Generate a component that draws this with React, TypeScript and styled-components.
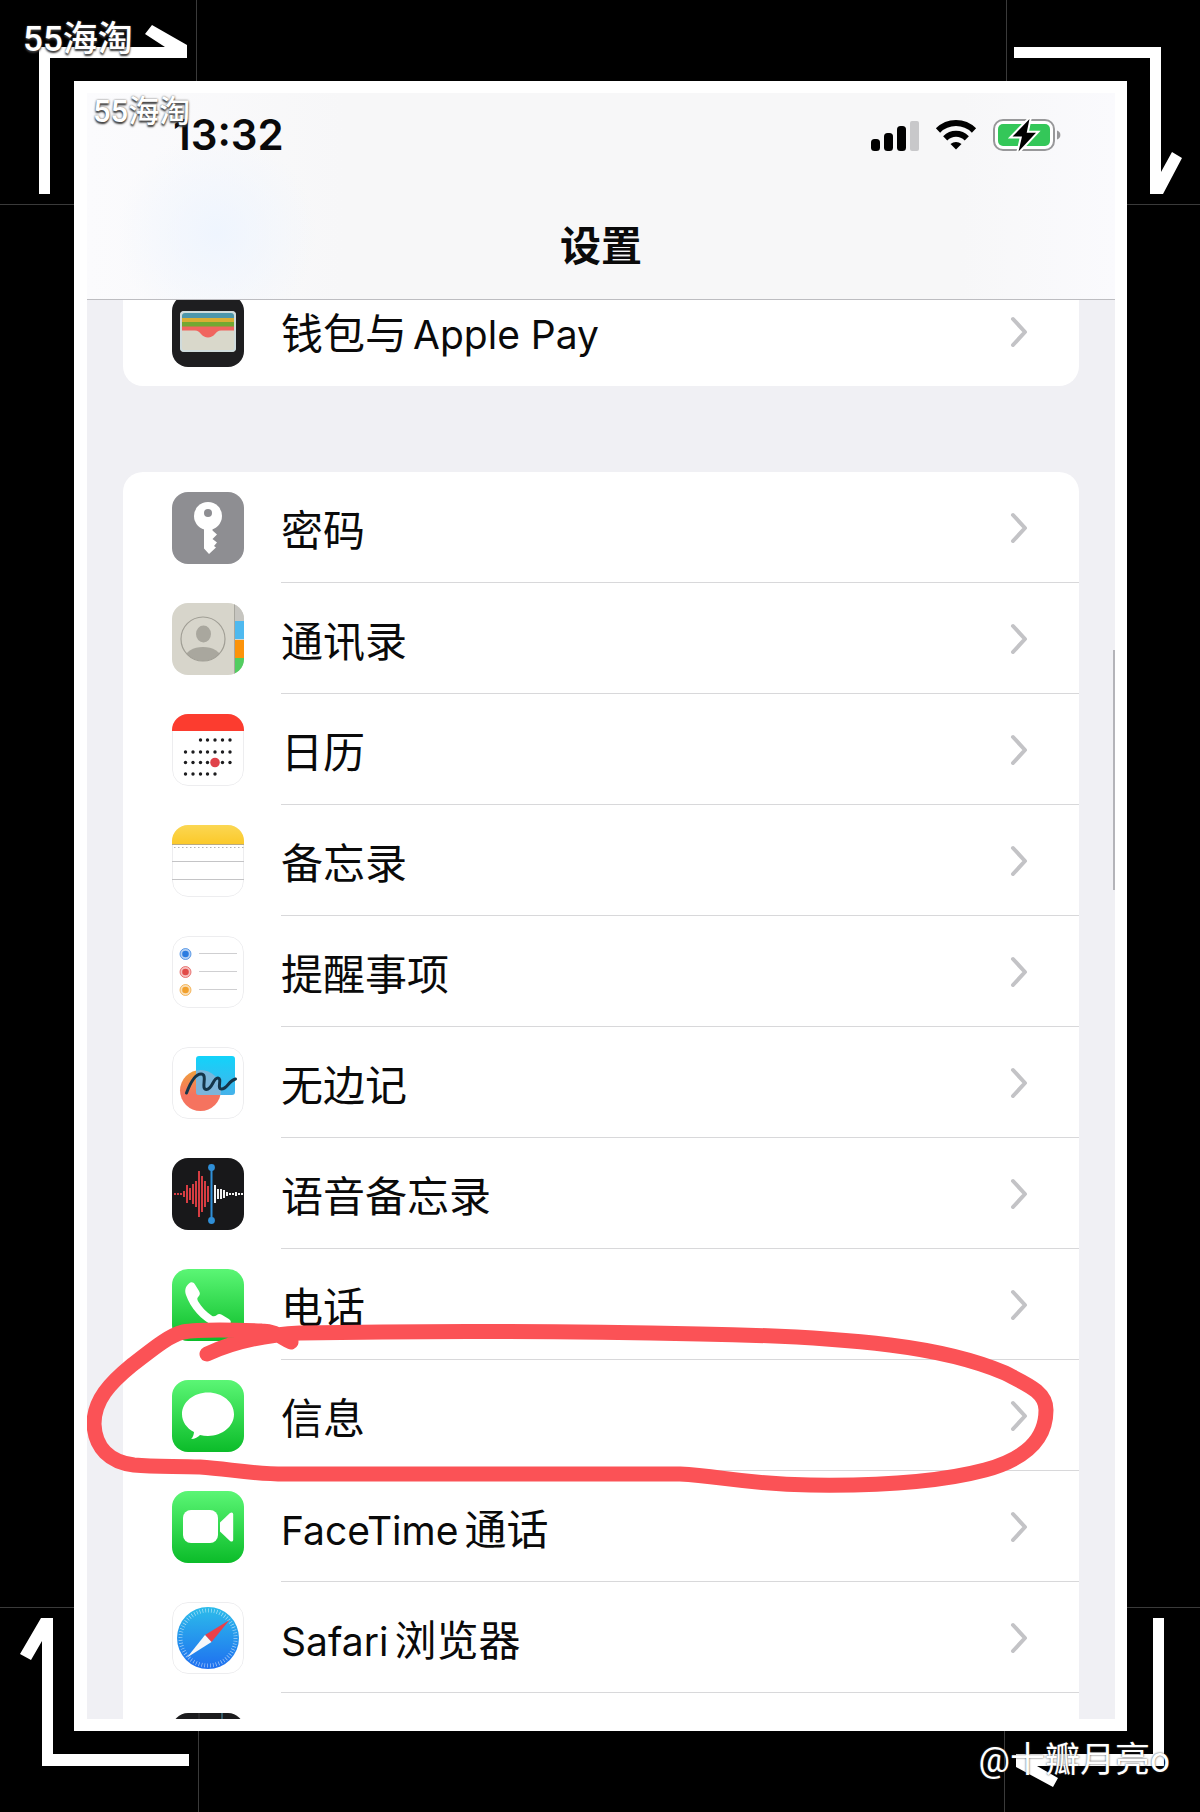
import type { ReactNode } from "react";
import styled, { createGlobalStyle, css } from "styled-components";

const GlobalStyle = createGlobalStyle`
  * {
    box-sizing: border-box;
  }

  body {
    margin: 0;
    background: #000;
    font-family: Inter, "Noto Sans CJK SC", sans-serif;
    color: #0a0a0a;
  }
`;

const StyledPage = styled.div`
  position: relative;
  display: flex;
  height: 100vh;
  padding: 81px 73px 81px 74px;
  background: #000;
  overflow: hidden;
`;

const StyledFrame = styled.main`
  display: flex;
  flex: 1;
  min-width: 0;
  padding: 12px 12px 12px 13px;
  background: #fff;
`;

const StyledScreen = styled.div`
  position: relative;
  display: flex;
  flex: 1;
  flex-direction: column;
  min-width: 0;
  background: #f0f0f4;
`;

const StyledHeader = styled.header`
  flex-shrink: 0;
  background:
    radial-gradient(circle at 130px 140px, #eff5fe 0, rgba(239, 245, 254, 0) 100px),
    linear-gradient(90deg, #fbfbfd 0, #f7f7f8 25%, #f7f7f8 85%, #fafafd 100%);
  border-bottom: 1px solid #bdbdc1;
`;

const StyledStatusBar = styled.div`
  display: flex;
  justify-content: space-between;
  align-items: center;
  height: 84px;
  padding: 0 54px 0 86px;
`;

const StyledTime = styled.time`
  font-size: 42px;
  font-weight: 600;
  line-height: 48px;
`;

const StyledStatusIcons = styled.div`
  display: flex;
  align-items: center;
  gap: 16px;
`;

const StyledTitle = styled.h1`
  margin: 0;
  padding: 44px 0 28px;
  font-size: 41px;
  font-weight: 600;
  line-height: 50px;
  text-align: center;
`;

const StyledScroller = styled.div`
  flex: 1;
  min-height: 0;
  padding: 0 36px;
  overflow: hidden;
`;

const StyledGroup = styled.ul<{ $scrolled?: boolean }>`
  margin: 0 0 86px;
  padding: 0;
  list-style: none;
  background: #fff;
  border-radius: 20px;

  /* the first group is partly scrolled under the header */
  ${(props) =>
    props.$scrolled &&
    css`
      margin-top: -25px;
    `}
`;

const StyledItem = styled.li`
  position: relative;
`;

const StyledRow = styled.a`
  display: flex;
  align-items: center;
  gap: 37px;
  height: 111px;
  padding-left: 49px;
  color: inherit;
  text-decoration: none;
`;

const StyledRowBody = styled.span<{ $last?: boolean }>`
  display: flex;
  flex: 1;
  justify-content: space-between;
  align-items: center;
  height: 100%;
  padding-right: 51px;
  border-bottom: ${(props) => (props.$last ? "0" : "1px solid #d8d8da")};
`;

const StyledLabel = styled.span`
  padding-top: 8px;
  font-size: 42px;
  line-height: 50px;
  white-space: nowrap;
`;

const StyledLatin = styled.span<{ $side: "left" | "right" }>`
  margin-${(props) => props.$side}: 6px;
  font-size: 39px;
`;

const StyledIcon = styled.svg`
  display: block;
  flex-shrink: 0;
  width: 72px;
  height: 72px;
  border-radius: 16px;
`;

const StyledScrollbar = styled.div`
  position: absolute;
  top: 557px;
  right: 0;
  width: 2px;
  height: 240px;
  background: #b4b4b9;
`;

const StyledCircleMark = styled.svg`
  position: absolute;
  top: -40px;
  left: -43px;
  z-index: 1;
  width: calc(100% + 24px);
  height: 180px;
  pointer-events: none;
`;

const StyledCorner = styled.svg<{ $top?: boolean; $left?: boolean }>`
  position: absolute;
  ${(props) => (props.$top ? "top: 0;" : "bottom: 0;")}
  ${(props) => (props.$left ? "left: 0;" : "right: 0;")}
  width: 200px;
  height: 206px;
  pointer-events: none;
`;

const StyledWatermark = styled.div<{ $small?: boolean }>`
  position: absolute;
  top: ${(props) => (props.$small ? "90px" : "18px")};
  left: ${(props) => (props.$small ? "93px" : "23px")};
  color: #fff;
  font-family: Roboto, "Noto Sans CJK SC", sans-serif;
  font-size: ${(props) => (props.$small ? "31px" : "35px")};
  font-weight: 500;
  line-height: 44px;
  text-shadow:
    0 0 2px #555,
    0 2px 2px #333;
`;

const StyledAuthor = styled.div`
  position: absolute;
  right: 30px;
  bottom: 29px;
  color: #fff;
  font-family: Roboto, "Noto Sans CJK SC", sans-serif;
  font-size: 35px;
  line-height: 44px;
  text-shadow: 0 0 2px #333;
`;

const Chevron = () => (
  <svg width="18" height="32" viewBox="0 0 18 32" fill="none">
    <path
      d="M3 4 15 17 3 30"
      stroke="#c3c3c6"
      strokeWidth="4"
      strokeLinecap="round"
      strokeLinejoin="round"
    />
  </svg>
);

const SignalIcon = () => (
  <svg width="48" height="32" viewBox="0 0 48 32">
    <rect x="0" y="20" width="9" height="12" rx="3.500" />
    <rect x="13" y="14" width="9" height="18" rx="3.500" />
    <rect x="26" y="7" width="9" height="25" rx="3.500" />
    <rect x="39" y="2" width="9" height="30" rx="2" fill="#c8c8ca" />
  </svg>
);

const WifiIcon = () => (
  <svg width="42" height="32" viewBox="0 0 42 32" fill="none">
    <path d="M3 11.500C13 1.600 29 1.600 39 11.500" stroke="#000" strokeWidth="6" />
    <path d="M10.200 19.300C16.500 13.300 25.500 13.300 31.800 19.300" stroke="#000" strokeWidth="6" />
    <path d="M15.500 25C18.800 22.300 23.200 22.300 26.500 25L21 30.600Z" fill="#000" />
  </svg>
);

const BatteryIcon = () => (
  <svg width="68" height="34" viewBox="0 0 68 34">
    <rect x="1" y="2" width="60" height="30" rx="9" fill="#fff" stroke="#98989a" strokeWidth="2" />
    <rect x="5" y="6" width="52" height="22" rx="5" fill="#34c759" />
    <path d="M64 12.500c4.500 1.500 4.500 7.500 0 9z" fill="#98989a" />
    <path
      d="M36.500 1 19.500 18.600h9.500L25.500 33.500 43 14.800h-9.300z"
      fill="#000"
      stroke="#fff"
      strokeWidth="4"
      paintOrder="stroke"
    />
  </svg>
);

const Outline = () => (
  <rect x="0.5" y="0.5" width="71" height="71" rx="15.500" fill="none" stroke="#ededef" />
);

const WalletIcon = () => (
  <StyledIcon viewBox="0 0 72 72">
    <rect width="72" height="72" fill="#1e1e20" />
    <rect x="8" y="16" width="56" height="41" rx="4" fill="#d9d8cb" />
    <path d="M10 24v-3a3 3 0 0 1 3-3h46a3 3 0 0 1 3 3v3z" fill="#4c97ab" />
    <rect x="10" y="23" width="52" height="5" fill="#d9ae34" />
    <rect x="10" y="27" width="52" height="5" fill="#73a832" />
    <path
      d="M10 31.500h52v4H49c-3 0-4 1.500-6 3.500-3.500 4.500-10.500 4.500-14 0-2-2-3-3.500-6-3.500H10z"
      fill="#f0655f"
    />
    <rect x="9" y="17" width="54" height="39" rx="3" fill="none" stroke="#ccdde2" strokeWidth="1.500" />
  </StyledIcon>
);

const KeyIcon = () => (
  <StyledIcon viewBox="0 0 72 72">
    <rect width="72" height="72" fill="#8e8e92" />
    <circle cx="36" cy="24" r="14" fill="#fff" />
    <path d="M32 35h8.500v3.500l4.500 4-4.500 4.500 4.500 3.500-3 3.500 2 1.500-7 6.500-5-5.500z" fill="#fff" />
    <circle cx="36" cy="21" r="4" fill="#8e8e92" />
  </StyledIcon>
);

const ContactsIcon = () => (
  <StyledIcon viewBox="0 0 72 72">
    <rect width="72" height="72" fill="#d7d5cb" />
    <rect x="62" width="1" height="72" fill="#a8a79f" />
    <rect x="63" width="9" height="18" fill="#c6c5c0" />
    <rect x="63" y="18" width="9" height="18" fill="#4fb9ef" />
    <rect x="63" y="37" width="9" height="18" fill="#fc930a" />
    <rect x="63" y="55" width="9" height="17" fill="#52cd60" />
    <clipPath id="contact-clip">
      <circle cx="31" cy="36" r="22" />
    </clipPath>
    <g clipPath="url(#contact-clip)" fill="#a9a79e">
      <ellipse cx="31.500" cy="31" rx="7.500" ry="8.500" />
      <ellipse cx="31" cy="55" rx="18" ry="11" />
    </g>
    <circle cx="31" cy="36" r="22" fill="none" stroke="#a09e95" strokeWidth="1.200" />
  </StyledIcon>
);

const calendarColumns = [13.5, 21, 28.5, 35.5, 43, 50.5, 58];
const calendarRows = [
  { y: 26, from: 2, to: 6 },
  { y: 38, from: 0, to: 6 },
  { y: 48.5, from: 0, to: 6 },
  { y: 60, from: 0, to: 4 },
];

const CalendarIcon = () => (
  <StyledIcon viewBox="0 0 72 72">
    <rect width="72" height="72" fill="#fff" />
    <Outline />
    <rect width="72" height="17" fill="#fc3c2f" />
    {calendarRows.map((row) =>
      calendarColumns
        .slice(row.from, row.to + 1)
        .map((x) => <circle key={`${x}-${row.y}`} cx={x} cy={row.y} r="1.700" fill="#1c1c1e" />),
    )}
    <circle cx="43" cy="48.500" r="4.800" fill="#e0424a" />
  </StyledIcon>
);

const NotesIcon = () => (
  <StyledIcon viewBox="0 0 72 72">
    <linearGradient id="notes-top" x1="0" y1="0" x2="0" y2="1">
      <stop offset="0" stopColor="#fbd753" />
      <stop offset="1" stopColor="#fbc92a" />
    </linearGradient>
    <rect width="72" height="72" fill="#fff" />
    <Outline />
    <rect width="72" height="19" fill="url(#notes-top)" />
    <path d="M0 19.500h72" stroke="#b9ab82" />
    <path d="M2 22.500h70" stroke="#b5b5b5" strokeDasharray="1.500 2.500" />
    <path d="M0 36.500h72M0 54.500h72" stroke="#c4c4c6" />
  </StyledIcon>
);

const reminders = [
  { y: 18, color: "#2b7ce0" },
  { y: 36, color: "#e14b48" },
  { y: 54, color: "#f1a02c" },
];

const RemindersIcon = () => (
  <StyledIcon viewBox="0 0 72 72">
    <rect width="72" height="72" fill="#fff" />
    <Outline />
    {reminders.map((item) => (
      <g key={item.y}>
        <circle
          cx="13.500"
          cy={item.y}
          r="5.500"
          fill={item.color}
          fillOpacity="0.350"
          stroke={item.color}
          strokeOpacity="0.700"
        />
        <circle cx="13.500" cy={item.y} r="3.300" fill={item.color} />
        <path d={`M27 ${item.y - 0.5}h38`} stroke="#cfcfd1" />
      </g>
    ))}
  </StyledIcon>
);

const FreeformIcon = () => (
  <StyledIcon viewBox="0 0 72 72">
    <linearGradient id="freeform-circle" x1="0" y1="0" x2="0" y2="1">
      <stop offset="0" stopColor="#efa03c" />
      <stop offset="0.600" stopColor="#f5735f" />
    </linearGradient>
    <linearGradient id="freeform-square" x1="0" y1="0" x2="0" y2="1">
      <stop offset="0" stopColor="#12d3fa" />
      <stop offset="1" stopColor="#46b2ea" />
    </linearGradient>
    <clipPath id="freeform-clip">
      <rect x="24" y="9" width="39" height="39" rx="3" />
    </clipPath>
    <rect width="72" height="72" fill="#fff" />
    <Outline />
    <circle cx="28.500" cy="43.500" r="20.500" fill="url(#freeform-circle)" />
    <rect x="24" y="9" width="39" height="39" rx="3" fill="url(#freeform-square)" />
    <circle cx="28.500" cy="43.500" r="20.500" fill="#8db4d4" fillOpacity="0.800" clipPath="url(#freeform-clip)" />
    <path
      d="M14.500 46c3-8 8-19 14.500-19 7.500 0-1 15.500 5.500 15.500 6 0 6.500-12 11.500-11.500 4.500.500-1.500 11 3.500 11 5.500 0 7-8 14-10"
      fill="none"
      stroke="#143549"
      strokeWidth="3"
      strokeLinecap="round"
    />
  </StyledIcon>
);

const redWave = [1, 1, 1, 3, 9, 6, 10, 13, 23, 18, 13, 8];
const whiteWave = [9, 5, 5, 4, 2, 1, 1, 2, 1, 1];

const VoiceMemosIcon = () => (
  <StyledIcon viewBox="0 0 72 72">
    <rect width="72" height="72" fill="#18181a" />
    {redWave.map((h, i) => (
      <rect key={i} x={2 + i * 3} y={36 - h} width="2" height={h * 2} fill="#d63d42" />
    ))}
    {whiteWave.map((h, i) => (
      <rect key={i} x={42 + i * 3} y={36 - h} width="2" height={h * 2} fill="#f2f2f2" />
    ))}
    <path d="M39.500 10v53" stroke="#2f8fd8" strokeWidth="2" />
    <circle cx="39.500" cy="9.500" r="3.400" fill="#2f8fd8" />
    <circle cx="39.500" cy="62.500" r="3.400" fill="#2f8fd8" />
  </StyledIcon>
);

const GreenTile = ({ id, children }: { id: string; children: ReactNode }) => (
  <StyledIcon viewBox="0 0 72 72">
    <linearGradient id={id} x1="0" y1="0" x2="0" y2="1">
      <stop offset="0" stopColor="#5bf675" />
      <stop offset="1" stopColor="#0bbc29" />
    </linearGradient>
    <rect width="72" height="72" fill={`url(#${id})`} />
    {children}
  </StyledIcon>
);

const PhoneIcon = () => (
  <GreenTile id="green-phone">
    <path
      d="M17 14.500c2-2 4.500-1.500 6 1l4 6.500c1.400 2.400 1 4-.5 5.500-1.700 1.600-1.400 3-.3 5 3.400 5.600 7.800 10.500 13.300 14 2 1.300 3.500 1 5-.3 1.700-1.400 3.300-1.700 5.300-.500l7 4.300c2.600 1.700 2.600 3.500.700 5.500-4 4.500-9 5-14.500 2.300C29 51 18.500 39 14 26c-1.500-4.500-.700-8.500 3-11.500z"
      fill="#fff"
    />
  </GreenTile>
);

const MessagesIcon = () => (
  <GreenTile id="green-messages">
    <path
      d="M36 12.500c14.400 0 26 9.700 26 21.700s-11.600 21.700-26 21.700c-2.800 0-5.400-.300-8-1-2 2-5 4-8.800 4.200 1.800-2 2.600-4.300 2.800-7C14.500 48 10 41.500 10 34.200c0-12 11.600-21.700 26-21.700z"
      fill="#fff"
    />
  </GreenTile>
);

const FaceTimeIcon = () => (
  <GreenTile id="green-facetime">
    <rect x="11" y="19" width="35" height="33" rx="8" fill="#fff" />
    <path d="M48 31.500 58 22c1.800-1.200 3.200-.500 3.200 1.500v25c0 2-1.400 2.700-3.200 1.500L48 40.500z" fill="#fff" />
  </GreenTile>
);

const SafariIcon = () => (
  <StyledIcon viewBox="0 0 72 72">
    <linearGradient id="safari-dial" x1="0" y1="0" x2="0" y2="1">
      <stop offset="0" stopColor="#2cbcea" />
      <stop offset="1" stopColor="#1f6ff0" />
    </linearGradient>
    <rect width="72" height="72" fill="#fff" />
    <Outline />
    <circle cx="36" cy="36" r="31" fill="url(#safari-dial)" />
    <circle
      cx="36"
      cy="36"
      r="27.500"
      fill="none"
      stroke="#fff"
      strokeOpacity="0.600"
      strokeWidth="4"
      strokeDasharray="0.700 2.180"
    />
    <path d="M57.500 18 33 33l6.500 7z" fill="#e8404a" />
    <path d="M15 55.500 33 33l6.500 7z" fill="#f6f8fa" />
  </StyledIcon>
);

const StocksIcon = () => (
  <StyledIcon viewBox="0 0 72 72">
    <rect width="72" height="72" fill="#1b1b1d" />
    <path d="M50 0v72" stroke="#3d6f80" strokeWidth="1.500" />
    <path d="M27 0v72" stroke="#3a3a3d" />
  </StyledIcon>
);

const CircleMark = () => (
  <StyledCircleMark viewBox="80 1320 980 180" preserveAspectRatio="none">
    <path
      d="M291 1342C282 1338 276 1331 262 1331C235 1330 200 1329 183 1332C167 1336 148 1353 132 1365C110 1383 94 1400 94 1424C95 1448 110 1462 134 1465C155 1467 175 1466 200 1467C230 1469 250 1474 285 1474C400 1475 560 1473 680 1474C720 1476 745 1484 810 1485C880 1486 940 1482 985 1470C1025 1459 1046 1440 1046 1410C1046 1392 1028 1385 1005 1373C970 1358 930 1350 890 1345C830 1338 770 1335 700 1334C560 1331 400 1331 300 1333C265 1335 235 1341 207 1354"
      fill="none"
      stroke="#fb5256"
      strokeWidth="15"
      strokeLinecap="round"
      strokeLinejoin="round"
    />
  </StyledCircleMark>
);

type Setting = {
  name: string;
  icon: ReactNode;
  label?: ReactNode;
  marked?: boolean;
};

const settings: Setting[] = [
  { name: "passwords", icon: <KeyIcon />, label: "密码" },
  { name: "contacts", icon: <ContactsIcon />, label: "通讯录" },
  { name: "calendar", icon: <CalendarIcon />, label: "日历" },
  { name: "notes", icon: <NotesIcon />, label: "备忘录" },
  { name: "reminders", icon: <RemindersIcon />, label: "提醒事项" },
  { name: "freeform", icon: <FreeformIcon />, label: "无边记" },
  { name: "voice-memos", icon: <VoiceMemosIcon />, label: "语音备忘录" },
  { name: "phone", icon: <PhoneIcon />, label: "电话" },
  { name: "messages", icon: <MessagesIcon />, label: "信息", marked: true },
  {
    name: "facetime",
    icon: <FaceTimeIcon />,
    label: (
      <>
        <StyledLatin $side="right">FaceTime</StyledLatin>通话
      </>
    ),
  },
  {
    name: "safari",
    icon: <SafariIcon />,
    label: (
      <>
        <StyledLatin $side="right">Safari</StyledLatin>浏览器
      </>
    ),
  },
  { name: "stocks", icon: <StocksIcon /> },
];

const SettingRow = ({ setting, last }: { setting: Setting; last?: boolean }) => (
  <StyledItem>
    <StyledRow href={`#${setting.name}`}>
      {setting.icon}
      <StyledRowBody $last={last}>
        {setting.label && <StyledLabel>{setting.label}</StyledLabel>}
        {setting.label && <Chevron />}
      </StyledRowBody>
    </StyledRow>
    {setting.marked && <CircleMark />}
  </StyledItem>
);

const Corners = () => (
  <>
    <StyledCorner $top $left viewBox="0 0 200 206">
      <path d="M196.500 0v81M0 204.500h74" stroke="#3a3a3a" />
      <path d="M39 47h126l-20-13 7-9 35 20v13H50v136H39z" fill="#fff" />
    </StyledCorner>
    <StyledCorner $top viewBox="1000 0 200 206">
      <path d="M1006.500 0v81M1127 204.500h73" stroke="#3a3a3a" />
      <path d="M1014 47h147v125l11-20 10 6-19 36h-13V58h-136z" fill="#fff" />
    </StyledCorner>
    <StyledCorner $left viewBox="0 1606 200 206">
      <path d="M198.500 1731v81M0 1607.500h74" stroke="#3a3a3a" />
      <path d="M41 1618h12v136h136v12H42v-125l-11 19-11-6z" fill="#fff" />
    </StyledCorner>
    <StyledCorner viewBox="1000 1606 200 206">
      <path d="M1004.500 1731v81M1127 1607.500h73" stroke="#3a3a3a" />
      <path d="M1153 1618h11v148h-127l21 12-5 9-37-20v-13h137z" fill="#fff" />
    </StyledCorner>
  </>
);

const App = () => {
  return (
    <StyledPage>
      <GlobalStyle />
      <Corners />
      <StyledFrame>
        <StyledScreen>
          <StyledHeader>
            <StyledStatusBar>
              <StyledTime>13:32</StyledTime>
              <StyledStatusIcons>
                <SignalIcon />
                <WifiIcon />
                <BatteryIcon />
              </StyledStatusIcons>
            </StyledStatusBar>
            <StyledTitle>设置</StyledTitle>
          </StyledHeader>
          <StyledScroller>
            <StyledGroup $scrolled>
              <SettingRow
                setting={{
                  name: "wallet",
                  icon: <WalletIcon />,
                  label: (
                    <>
                      钱包与<StyledLatin $side="left">Apple Pay</StyledLatin>
                    </>
                  ),
                }}
                last
              />
            </StyledGroup>
            <StyledGroup>
              {settings.map((setting) => (
                <SettingRow key={setting.name} setting={setting} />
              ))}
            </StyledGroup>
          </StyledScroller>
          <StyledScrollbar />
        </StyledScreen>
      </StyledFrame>
      <StyledWatermark>55海淘</StyledWatermark>
      <StyledWatermark $small>55海淘</StyledWatermark>
      <StyledAuthor>@十瓣月亮o</StyledAuthor>
    </StyledPage>
  );
};

export default App;
